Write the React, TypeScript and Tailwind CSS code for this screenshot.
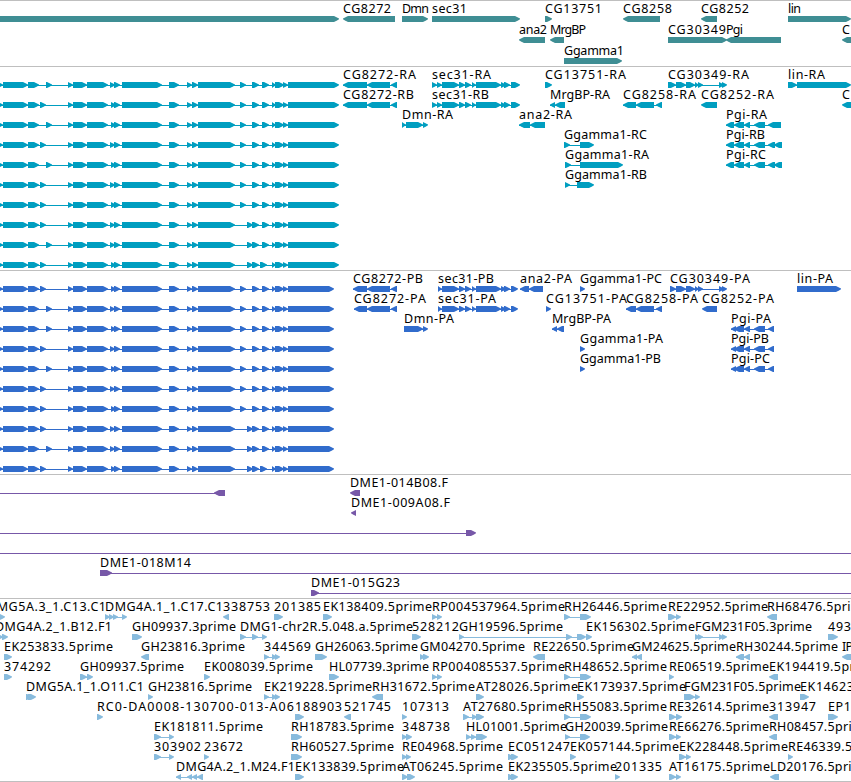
type Span = [number, number];

// [row, label, strand, exons, right edge of the label, optional connector range]
type Feature = [number, string, '+' | '-', Span[], number, Span?];

interface TrackProps {
  className: string;
  height: number;
  pitch?: number;
  features: Feature[];
}

const BAR = 6;
const TIP = 5;
const FIRST_ROW = 15;

function transcript(row: number, third: number, sixth: number, late: number, later: number, end: number): Feature {
  return [
    row, '', '+',
    [
      [-4, 3], [3, 28], [28, 39], [third, third + 6], [68, 73], [73, 87], [87, 108], [sixth, sixth + 5],
      [114, 120], [122, 162], [169, 179], [187, 192], [192, 198], [198, 235], [late, late + 6],
      [252, 259], [later, later + 7], [272, 276], [275, 284], [283, 288], [288, end],
    ],
    0,
  ];
}

const SEC31: Span[] = [[442, 459], [459, 465], [465, 471], [472, 476], [476, 501], [501, 506], [504, 510]];
const CG30349: Span[] = [[676, 686], [686, 695], [695, 699], [698, 703], [719, 724], [722, 727]];
const PGI: Span[] = [[734, 744], [744, 750], [754, 765]];
const RH: Span[] = [[564, 570], [580, 591]];

const genes: Feature[] = [
  [0, '', '+', [[-10, 339]], 0],
  [0, 'CG8272', '-', [[343, 395]], 391],
  [0, 'Dmn', '+', [[402, 428]], 429],
  [0, 'sec31', '+', [[432, 520]], 467],
  [0, 'CG13751', '+', [[545, 552]], 602],
  [0, 'CG8258', '-', [[623, 660]], 672],
  [0, 'CG8252', '-', [[701, 717]], 749],
  [0, 'lin', '+', [[788, 851]], 801],
  [1, 'ana2', '-', [[519, 545]], 547],
  [1, 'MrgBP', '-', [[550, 564]], 586],
  [1, 'CG30349', '+', [[668, 727]], 726],
  [1, 'Pgi', '-', [[726, 781]], 743],
  [1, 'C', '-', [[842, 870]], 851],
  [2, 'Ggamma1', '+', [[564, 622]], 624],
];

const transcripts: Feature[] = [
  transcript(0, 46, 110, 240, 262, 339),
  transcript(1, 40, 111, 240, 262, 339),
  transcript(2, 46, 111, 240, 262, 339),
  transcript(3, 40, 110, 240, 262, 339),
  transcript(4, 46, 111, 240, 262, 339),
  transcript(5, 40, 110, 240, 262, 339),
  transcript(6, 40, 111, 240, 262, 339),
  transcript(7, 40, 110, 247, 262, 339),
  transcript(8, 46, 110, 247, 262, 339),
  transcript(9, 40, 111, 247, 260, 339),
  [0, 'CG8272-RA', '-', [[343, 367], [367, 390], [391, 397]], 416],
  [0, 'sec31-RA', '+', [[432, 437], [437, 442], ...SEC31, [511, 520]], 491],
  [0, 'CG13751-RA', '+', [[545, 552]], 626],
  [0, 'CG30349-RA', '+', [[668, 676], ...CG30349], 749],
  [0, 'lin-RA', '+', [[788, 797], [797, 851]], 825],
  [1, 'CG8272-RB', '-', [[343, 367], [367, 390], [391, 397]], 414],
  [1, 'sec31-RB', '+', [[432, 437], [437, 442], ...SEC31, [511, 520]], 489],
  [1, 'MrgBP-RA', '-', [[550, 555], [555, 565]], 610],
  [1, 'CG8258-RA', '-', [[623, 636], [636, 654], [656, 662]], 696],
  [1, 'CG8252-RA', '-', [[701, 717]], 774],
  [1, 'C', '-', [[842, 870]], 851],
  [2, 'Dmn-RA', '+', [[402, 406], [406, 423], [423, 428]], 453],
  [2, 'ana2-RA', '-', [[519, 530], [530, 545]], 572],
  [2, 'Pgi-RA', '-', [[726, 734], ...PGI, [768, 781]], 767],
  [3, 'Ggamma1-RC', '+', [[564, 570], [580, 594]], 647],
  [3, 'Pgi-RB', '-', [[726, 734], ...PGI, [768, 775], [774, 782]], 765],
  [4, 'Ggamma1-RA', '+', [[565, 571], [580, 623]], 649],
  [4, 'Pgi-RC', '-', [[726, 734], ...PGI, [768, 775], [774, 782]], 766],
  [5, 'Ggamma1-RB', '+', [[565, 570], [577, 594]], 647],
];

const proteins: Feature[] = [
  transcript(0, 40, 111, 240, 262, 334),
  transcript(1, 46, 110, 240, 262, 334),
  transcript(2, 46, 111, 240, 262, 334),
  transcript(3, 40, 110, 240, 262, 334),
  transcript(4, 46, 111, 240, 262, 334),
  transcript(5, 40, 110, 240, 262, 334),
  transcript(6, 40, 111, 240, 262, 334),
  transcript(7, 40, 110, 247, 262, 334),
  transcript(8, 46, 110, 247, 262, 334),
  transcript(9, 40, 111, 247, 260, 334),
  [0, 'CG8272-PB', '-', [[353, 367], [367, 390], [391, 397]], 423],
  [0, 'sec31-PB', '+', [[438, 442], ...SEC31, [511, 518]], 494],
  [0, 'ana2-PA', '-', [[520, 529], [529, 543]], 572],
  [0, 'Ggamma1-PC', '+', [[580, 585]], 662],
  [0, 'CG30349-PA', '+', [[670, 676], ...CG30349], 750],
  [0, 'lin-PA', '+', [[797, 841]], 833],
  [1, 'CG8272-PA', '-', [[354, 367], [367, 390], [391, 397]], 426],
  [1, 'sec31-PA', '+', [[438, 442], ...SEC31, [511, 518]], 496],
  [1, 'CG13751-PA', '+', [[546, 551]], 627],
  [1, 'CG8258-PA', '-', [[626, 636], [636, 654], [656, 662]], 698],
  [1, 'CG8252-PA', '-', [[702, 717]], 774],
  [2, 'Dmn-PA', '+', [[404, 423], [423, 428]], 454],
  [2, 'MrgBP-PA', '-', [[552, 557], [557, 564]], 611],
  [2, 'Pgi-PA', '-', [[731, 736], ...PGI, [768, 774]], 771],
  [3, 'Ggamma1-PA', '+', [[580, 585]], 663],
  [3, 'Pgi-PB', '-', [[731, 736], ...PGI, [768, 774]], 769],
  [4, 'Ggamma1-PB', '+', [[580, 585]], 661],
  [4, 'Pgi-PC', '-', [[731, 736], ...PGI, [768, 774]], 770],
];

const clones: Feature[] = [
  [0, '', '-', [[214, 225]], 0, [0, 218]],
  [0, 'DME1-014B08.F', '-', [[350, 360]], 448],
  [1, 'DME1-009A08.F', '-', [[351, 356]], 450],
  [2, '', '+', [[466, 476]], 0, [0, 470]],
  [3, '', '+', [], 0, [0, 851]],
  [4, 'DME1-018M14', '+', [[100, 112]], 191, [100, 851]],
  [5, 'DME1-015G23', '+', [[311, 319]], 400, [311, 851]],
];

const ests: Feature[] = [
  [0, 'DMG5A.3_1.C13.C1', '+', [[-13, 5]], 106],
  [0, 'DMG4A.1_1.C17.C1', '+', [[105, 110], [109, 114], [113, 118], [122, 127]], 223],
  [0, '338753', '-', [[223, 229]], 270],
  [0, '201385', '+', [[274, 283]], 321],
  [0, 'EK138409.5prime', '+', [[323, 332]], 432],
  [0, 'RP004537964.5prime', '+', [[432, 437], [437, 442]], 565],
  [0, 'RH26446.5prime', '+', RH, 667],
  [0, 'RE22952.5prime', '+', [[668, 676], [676, 681]], 768],
  [0, 'RH68476.5prime', '-', [[767, 777]], 870],
  [1, 'DMG4A.2_1.B12.F1', '+', [[-5, 3], [2, 8]], 112],
  [1, 'GH09937.3prime', '+', [[132, 142]], 236],
  [1, 'DMG1-chr2R.5.048.a.5prime', '+', [[240, 246], [252, 258], [262, 267]], 413],
  [1, '528212', '+', [[412, 421]], 459],
  [1, 'GH19596.5prime', '+', [[459, 464], [566, 572], [577, 586]], 563],
  [1, 'EK156302.5prime', '+', [[586, 592]], 695],
  [1, 'FGM231F05.3prime', '+', [[695, 700], [698, 703], [719, 724], [722, 727]], 812],
  [1, '493', '+', [[828, 838]], 851],
  [2, 'EK253833.5prime', '+', [[4, 12]], 113],
  [2, 'GH23816.3prime', '-', [[141, 149]], 245],
  [2, '344569', '+', [[264, 269], [272, 277], [275, 280]], 311],
  [2, 'GH26063.5prime', '+', [[315, 327]], 418],
  [2, 'GM04270.5prime', '+', [[420, 425], [423, 429]], 525],
  [2, 'RE22650.5prime', '-', [[533, 545]], 634],
  [2, 'GM24625.5prime', '-', [[632, 637], [636, 642]], 736],
  [2, 'RH30244.5prime', '-', [[736, 744], [744, 750]], 838],
  [2, 'IP', '-', [[842, 870]], 853],
  [3, '374292', '+', [[4, 12]], 51],
  [3, 'GH09937.5prime', '+', [[80, 87], [87, 93]], 184],
  [3, 'EK008039.5prime', '+', [[204, 210]], 313],
  [3, 'HL07739.3prime', '+', [[329, 339]], 429],
  [3, 'RP004085537.5prime', '+', [[432, 437], [437, 442]], 565],
  [3, 'RH48652.5prime', '+', RH, 667],
  [3, 'RE06519.5prime', '+', [[669, 674]], 769],
  [3, 'EK194419.5prime', '-', [[769, 778]], 878],
  [4, 'DMG5A.1_1.O11.C1', '+', [[26, 32], [28, 36]], 144],
  [4, 'GH23816.5prime', '+', [[148, 153]], 252],
  [4, 'EK219228.5prime', '+', [[264, 269], [272, 277], [275, 280]], 372],
  [4, 'RH31672.5prime', '-', [[372, 383]], 475],
  [4, 'AT28026.5prime', '+', [[476, 484]], 578],
  [4, 'EK173937.5prime', '+', [[577, 584]], 686],
  [4, 'FGM231F05.5prime', '+', [[684, 695], [695, 700]], 801],
  [4, 'EK14623', '+', [[800, 809]], 854],
  [5, 'RC0-DA0008-130700-013-A06', '+', [[97, 103]], 294],
  [5, '188903', '+', [[295, 304]], 342],
  [5, '521745', '-', [[344, 351]], 391],
  [5, '107313', '+', [[402, 407]], 449],
  [5, 'AT27680.5prime', '+', [[463, 469], [472, 477], [476, 484]], 565],
  [5, 'RH55083.5prime', '+', RH, 667],
  [5, 'RE32614.5prime', '+', [[669, 676], [676, 682]], 769],
  [5, '313947', '-', [[769, 778]], 816],
  [5, 'EP1', '+', [[828, 838]], 851],
  [6, 'EK181811.5prime', '+', [[154, 161], [169, 174]], 263],
  [6, 'RH18783.5prime', '+', [[291, 302]], 394],
  [6, '348738', '+', [[402, 407], [406, 412]], 450],
  [6, 'HL01001.5prime', '+', [[466, 471], [471, 476], [476, 487]], 567],
  [6, 'GH20039.5prime', '+', [[565, 570], [580, 590]], 668],
  [6, 'RE66276.5prime', '+', [[669, 676], [676, 681]], 769],
  [6, 'RH08457.5prime', '-', [[769, 777]], 871],
  [7, '303902', '+', [[154, 161], [169, 174]], 201],
  [7, '23672', '+', [[204, 209]], 243],
  [7, 'RH60527.5prime', '+', [[291, 302]], 394],
  [7, 'RE04968.5prime', '+', [[402, 407], [406, 411]], 503],
  [7, 'EC051247', '+', [[508, 514], [511, 518]], 570],
  [7, 'EK057144.5prime', '+', [[570, 576]], 679],
  [7, 'EK228448.5prime', '+', [[679, 686], [686, 691]], 788],
  [7, 'RE46339.5prime', '+', [[788, 793]], 889],
  [8, 'DMG4A.2_1.M24.F1', '-', [[176, 181], [187, 192], [192, 197], [197, 203]], 295],
  [8, 'EK133839.5prime', '+', [[295, 304]], 404],
  [8, 'AT06245.5prime', '+', [[402, 408], [407, 415]], 503],
  [8, 'EK235505.5prime', '+', [[508, 514], [511, 518]], 617],
  [8, '201335', '+', [[615, 620]], 662],
  [8, 'AT16175.5prime', '+', [[669, 676], [676, 681]], 770],
  [8, 'LD20176.5prime', '-', [[770, 779]], 871],
];

// Flat bar with a slightly rounded point on the strand side
function arrowPoints([start, end]: Span, strand: '+' | '-', y: number) {
  const tip = Math.min(TIP, end - start);
  const [tail, head, dir] = strand === '+' ? [start, end, 1] : [end, start, -1];
  return [
    [tail, y],
    [head - dir * tip, y],
    [head - dir * 2, y + 1.4],
    [head, y + 2.5],
    [head, y + 3.2],
    [head - dir * 2, y + 4.4],
    [head - dir * tip, y + BAR],
    [tail, y + BAR],
  ]
    .map((p) => p.join(','))
    .join(' ');
}

function Track({ className, height, pitch = 20, features }: TrackProps) {
  return (
    <section className="border-t border-[#bfbfbf]">
      <svg width="851" height={height} className={`block overflow-hidden ${className}`}>
        {features.map(([row, label, strand, exons, labelEnd, connector], i) => {
          const y = FIRST_ROW + row * pitch;
          const line = connector ?? (exons.length > 1 ? [exons[0][0], exons[exons.length - 1][1] - 2] : null);
          return (
            <g key={i}>
              {line && <rect x={line[0]} y={y + 3} width={line[1] - line[0]} height={1} fill="currentColor" />}
              {exons.map((exon, j) => (
                <polygon key={j} points={arrowPoints(exon, strand, y)} fill="currentColor" />
              ))}
              {label && (
                <text
                  x={exons[0][0]}
                  y={y - 3}
                  textLength={labelEnd - exons[0][0]}
                  className="fill-black text-[12.5px]"
                >
                  {label}
                </text>
              )}
            </g>
          );
        })}
      </svg>
    </section>
  );
}

export default function App() {
  return (
    <main className="flex h-[782px] w-[851px] flex-col overflow-hidden border-b border-[#bfbfbf] bg-white font-['Noto_Sans',sans-serif]">
      <Track className="text-[#3f8e94]" height={65} pitch={21} features={genes} />
      <Track className="text-[#009ec0]" height={203} features={transcripts} />
      <Track className="text-[#316ccc]" height={203} features={proteins} />
      <Track className="text-[#7758a8]" height={123} features={clones} />
      <Track className="text-[#88bbdd]" height={182} features={ests} />
    </main>
  );
}
